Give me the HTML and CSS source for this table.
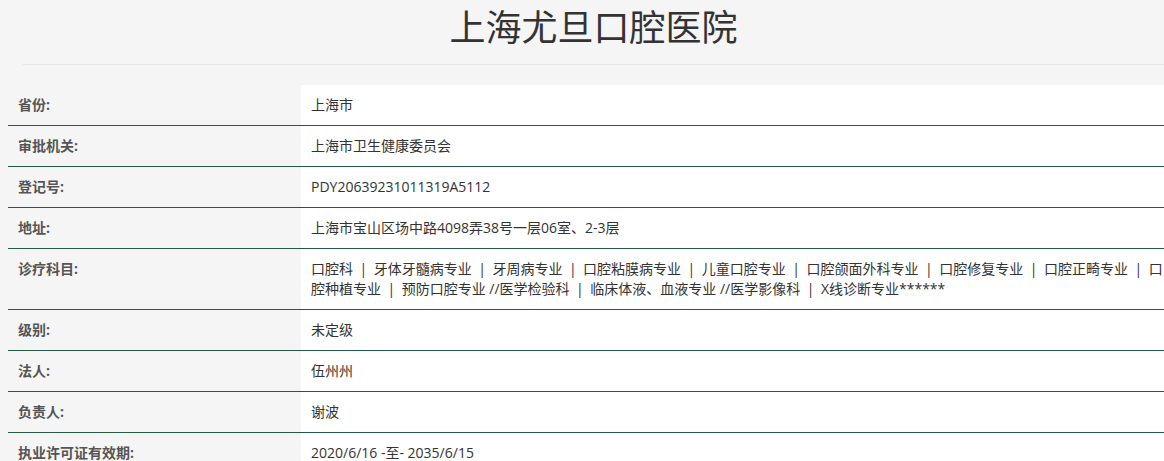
FILE: index.html
```html
<!DOCTYPE html>
<html lang="zh-CN">
<head>
<meta charset="utf-8">
<title>上海尤旦口腔医院</title>
<link rel="stylesheet" href="styles.css">
</head>
<body>
<div class="page">
  <header class="header">
    <h1 class="title">上海尤旦口腔医院</h1>
  </header>
  <table class="info">
    <tbody>
      <tr><th>省份:</th><td>上海市</td></tr>
      <tr><th>审批机关:</th><td>上海市卫生健康委员会</td></tr>
      <tr><th>登记号:</th><td>PDY20639231011319A5112</td></tr>
      <tr><th>地址:</th><td>上海市宝山区场中路4098弄38号一层06室、2-3层</td></tr>
      <tr><th>诊疗科目:</th><td>口腔科<span class="sep">|</span>牙体牙髓病专业<span class="sep">|</span>牙周病专业<span class="sep">|</span>口腔粘膜病专业<span class="sep">|</span>儿童口腔专业<span class="sep">|</span>口腔颌面外科专业<span class="sep">|</span>口腔修复专业<span class="sep">|</span>口腔正畸专业<span class="sep">|</span>口腔种植专业<span class="sep">|</span>预防口腔专业 //医学检验科<span class="sep">|</span>临床体液、血液专业 //医学影像科<span class="sep">|</span>X线诊断专业******</td></tr>
      <tr><th>级别:</th><td>未定级</td></tr>
      <tr><th>法人:</th><td>伍州州</td></tr>
      <tr><th>负责人:</th><td>谢波</td></tr>
      <tr><th>执业许可证有效期:</th><td>2020/6/16 -至- 2035/6/15</td></tr>
    </tbody>
  </table>
</div>
</body>
</html>
```

FILE: styles.css
```css
html, body {
  overflow: hidden;
}
body {
  margin: 0;
  background: #f5f5f5;
  font-family: "Open Sans", "Noto Sans CJK SC", sans-serif;
  color: #333;
}
.page {
  width: 1171px;
  margin-left: 8px;
}
.header {
  margin: 0 15px;
  border-bottom: 1px solid #e6e6e6;
  height: 64px;
}
.title {
  margin: 0;
  padding-top: 4px;
  text-align: center;
  font-size: 36px;
  font-weight: normal;
  line-height: 48px;
  color: #333;
}
.info {
  margin-top: 20px;
  width: 100%;
  border-collapse: collapse;
  font-size: 14px;
}
.info th,
.info td {
  padding: 10px 10px;
  line-height: 20px;
  vertical-align: top;
  text-align: left;
  border-bottom: 1px solid #245a45;
}
.info th {
  width: 273px;
  font-weight: bold;
  color: #555;
  background: #f5f5f5;
}
.info td {
  background: #fff;
  color: #333;
}
.sep {
  padding: 0 6.5px;
}
```
